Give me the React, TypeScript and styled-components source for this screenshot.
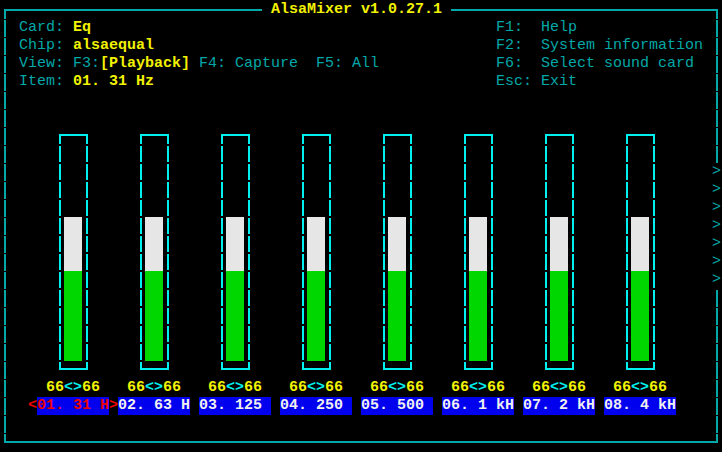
import React from 'react'
import styled, { createGlobalStyle, css } from 'styled-components'

const DIM_CYAN = '#00a8a8'
const CYAN = '#00f0f0'
const YELLOW = '#f2f200'
const BLUE = '#0000ee'
const RED = '#ee0000'
const WHITE = '#f0f0f0'
const BAR_WHITE = '#e6e6e6'
const BAR_GREEN = '#00d700'

type Tone = 'dim' | 'value' | 'cyan' | 'red' | 'white'

const tones: Record<Tone, ReturnType<typeof css>> = {
    dim: css`color: ${DIM_CYAN}; font-weight: normal;`,
    value: css`color: ${YELLOW}; font-weight: bold;`,
    cyan: css`color: ${CYAN}; font-weight: bold;`,
    red: css`color: ${RED}; font-weight: bold;`,
    white: css`color: ${WHITE}; font-weight: bold;`,
}

const channels = [
    { name: '01. 31 H', left: 66, right: 66 },
    { name: '02. 63 H', left: 66, right: 66 },
    { name: '03. 125 ', left: 66, right: 66 },
    { name: '04. 250 ', left: 66, right: 66 },
    { name: '05. 500 ', left: 66, right: 66 },
    { name: '06. 1 kH', left: 66, right: 66 },
    { name: '07. 2 kH', left: 66, right: 66 },
    { name: '08. 4 kH', left: 66, right: 66 },
]

const GlobalStyle = createGlobalStyle`
    html, body {
        margin: 0;
        padding: 0;
        background: #000;
    }
`

// 80x25 character terminal, 9x18 cells
const Screen = styled.div`
    width: 722px;
    height: 452px;
    box-sizing: border-box;
    padding: 1px;
    overflow: hidden;
    background: #000;
    display: grid;
    grid-template-columns: repeat(80, 9px);
    grid-template-rows: repeat(25, 18px);
    font-family: "Liberation Mono", "Courier New", monospace;
    font-size: 15px;
    line-height: 18px;
`

interface CellProps {
    $col: number,
    $row: number,
    $w?: number,
    $h?: number
}

const cell = css<CellProps>`
    grid-column: ${p => p.$col + 1} / span ${p => p.$w ?? 1};
    grid-row: ${p => p.$row + 1} / span ${p => p.$h ?? 1};
`

// line-drawing box: sides broken at every character row, like the terminal draws them
const dashedSides = (color: string, offset: number, gap: number) => css`
    background:
        linear-gradient(${color}, ${color}) left top / 100% 2px no-repeat,
        linear-gradient(${color}, ${color}) left bottom / 100% 2px no-repeat,
        linear-gradient(to bottom, ${color} 0 ${18 - gap}px, transparent ${18 - gap}px 18px) left 0 top ${offset}px / 2px 18px repeat-y,
        linear-gradient(to bottom, ${color} 0 ${18 - gap}px, transparent ${18 - gap}px 18px) right 0 top ${offset}px / 2px 18px repeat-y;
`

const OuterFrame = styled.div<CellProps>`
    ${cell};
    margin: 8px 3px 8px 3px;
    ${dashedSides(DIM_CYAN, 11, 1)};
`

const Title = styled.div<CellProps>`
    ${cell};
    z-index: 1;
    background: #000;
    white-space: pre;
    color: ${YELLOW};
    font-weight: bold;
`

const Text = styled.span<CellProps & { $tone: Tone }>`
    ${cell};
    white-space: pre;
    ${p => tones[p.$tone]};
`

const Part = styled.span<{ $tone: Tone }>`
    ${p => tones[p.$tone]};
`

const ScrollArrow = styled.span<CellProps>`
    ${cell};
    z-index: 1;
    background: #000;
    color: ${DIM_CYAN};
`

const MeterFrame = styled.div<CellProps>`
    ${cell};
    margin: 7px 3px 9px 4px;
    ${dashedSides(CYAN, 12, 2)};
`

const Bar = styled.div<CellProps>`
    ${cell};
    display: flex;
    flex-direction: column;
    justify-content: flex-end;
`

const BarPart = styled.div<{ $rows: number, $color: string }>`
    height: ${p => p.$rows * 18}px;
    background: ${p => p.$color};
`

const Volume = styled.span<CellProps>`
    ${cell};
    white-space: pre;
`

const ChannelName = styled.span<CellProps & { $active: boolean }>`
    ${cell};
    white-space: pre;
    background: ${BLUE};
    font-weight: bold;
    color: ${p => (p.$active ? RED : WHITE)};
`

const Marker = styled.span<CellProps>`
    ${cell};
    color: ${RED};
    font-weight: bold;
`

function Header() {
    return (
        <>
            <Text $col={2} $row={1} $tone="dim">Card:</Text>
            <Text $col={8} $row={1} $w={2} $tone="value">Eq</Text>
            <Text $col={2} $row={2} $tone="dim">Chip:</Text>
            <Text $col={8} $row={2} $w={9} $tone="value">alsaequal</Text>
            <Text $col={2} $row={3} $tone="dim">View:</Text>
            <Text $col={8} $row={3} $w={34} $tone="dim">
                F3:<Part $tone="value">[Playback]</Part> F4: Capture  F5: All
            </Text>
            <Text $col={2} $row={4} $tone="dim">Item:</Text>
            <Text $col={8} $row={4} $w={9} $tone="value">01. 31 Hz</Text>

            <Text $col={55} $row={1} $w={9} $tone="dim">F1:  Help</Text>
            <Text $col={55} $row={2} $w={23} $tone="dim">F2:  System information</Text>
            <Text $col={55} $row={3} $w={22} $tone="dim">F6:  Select sound card</Text>
            <Text $col={55} $row={4} $w={9} $tone="dim">Esc: Exit</Text>
        </>
    )
}

function Channel({ index, name, left, right }: { index: number, name: string, left: number, right: number }) {
    const base = index * 9
    const active = index === 0
    return (
        <>
            <MeterFrame $col={6 + base} $row={7} $w={4} $h={14} />
            <Bar $col={7 + base} $row={8} $w={2} $h={12}>
                <BarPart $rows={3} $color={BAR_WHITE} />
                <BarPart $rows={5} $color={BAR_GREEN} />
            </Bar>
            <Volume $col={5 + base} $row={21} $w={6}>
                <Part $tone="value">{left}</Part>
                <Part $tone="cyan">{'<>'}</Part>
                <Part $tone="value">{right}</Part>
            </Volume>
            {active && <Marker $col={3 + base} $row={22}>{'<'}</Marker>}
            <ChannelName $col={4 + base} $row={22} $w={8} $active={active}>{name}</ChannelName>
            {active && <Marker $col={12 + base} $row={22}>{'>'}</Marker>}
        </>
    )
}

export default function App() {
    return (
        <>
            <GlobalStyle />
            <Screen>
                <OuterFrame $col={0} $row={0} $w={80} $h={25} />
                <Title $col={29} $row={0} $w={21}> AlsaMixer v1.0.27.1 </Title>
                <Header />
                {[9, 10, 11, 12, 13, 14, 15].map(r => (
                    <ScrollArrow key={r} $col={79} $row={r}>{'>'}</ScrollArrow>
                ))}
                {channels.map((c, i) => (
                    <Channel key={c.name} index={i} {...c} />
                ))}
            </Screen>
        </>
    )
}
